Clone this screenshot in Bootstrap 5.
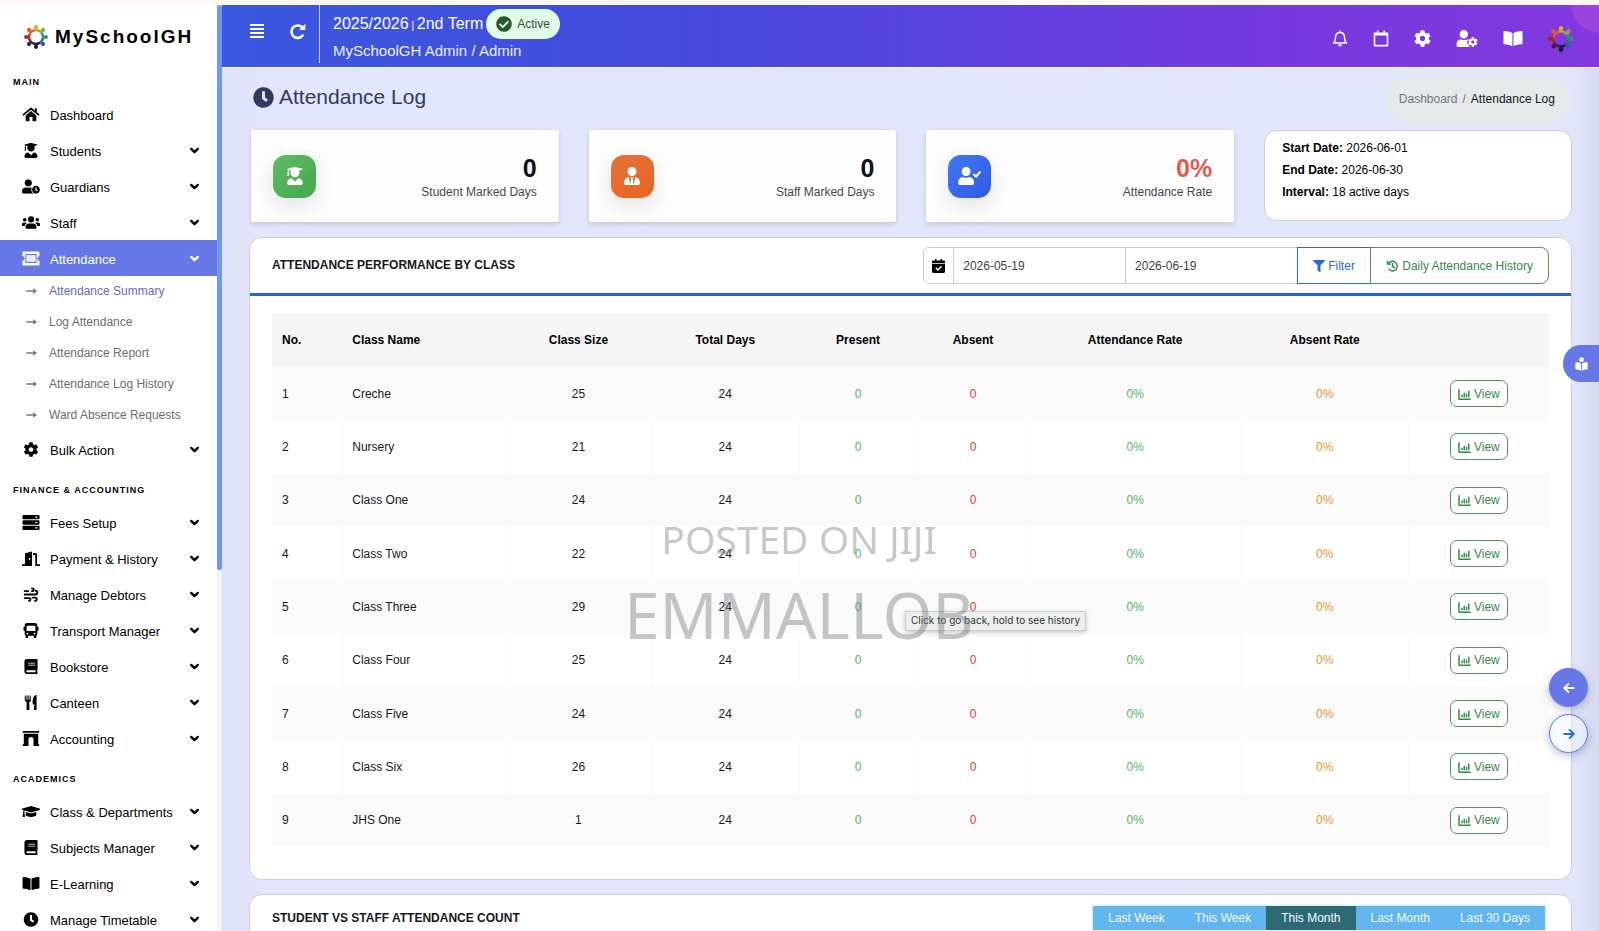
<!DOCTYPE html>
<html lang="en">
<head>
<meta charset="utf-8">
<meta name="viewport" content="width=device-width, initial-scale=1">
<title>Attendance Log</title>
<link href="https://cdn.jsdelivr.net/npm/bootstrap@5.3.0/dist/css/bootstrap.min.css" rel="stylesheet">
<style>
  body { font-family: "Liberation Sans", Arial, sans-serif; font-size: 12px; color: #16181b; background: #fff; border-top: 5px solid #fdf7f6; }
  svg { fill: currentColor; flex: none; }
  a { text-decoration: none; color: inherit; }
  .ln { fill: none; stroke: currentColor; stroke-linecap: round; stroke-linejoin: round; }

  /* sidebar */
  .side { width: 217px; flex: none; overflow: hidden; background: #fff; color: #000; }
  .brandline { height: 54px; padding: 10px 0 0 24px; gap: 7px; font-size: 19px; letter-spacing: 2px; }
  .side h2 { height: 37px; margin: 0; padding: 17px 0 0 13px; font-size: 9px; line-height: 12px; font-weight: 700; letter-spacing: 1px; }
  .side-link { height: 36px; padding: 4px 17px 0 22px; font-size: 13px; gap: 10px; }
  .side-link > svg:first-child { width: 18px; height: 15px; margin-bottom: 4px; }
  .side-link .chev { width: 11px; height: 11px; margin: 0 0 4px auto; }
  .side-link.open { background: #6777e6; color: #fff; }
  .side-sub { height: 31px; padding: 0 0 2px 26px; gap: 12px; font-size: 12px; color: #6a6d70; }
  .side-sub svg { width: 11px; height: 8px; color: #777; }
  .side-sub.now { color: #6468cf; }
  .rail { width: 5px; flex: none; background: #f1f5f5; }
  .rail div { height: 61%; background: #6f9aea; border-radius: 3px; }

  /* top bar */
  .stage { background: linear-gradient(90deg, #dfe2f8, #e2e6fc 3%, #e2e6fb 98%, #d6daf0); overflow: hidden; }
  .topbar { height: 63px; color: #fff; border-bottom: 1px solid #fff;
    background: radial-gradient(circle at 100% 0, #9a44dc 0 27px, transparent 28px), linear-gradient(90deg, #3a58df, #4549dc 35%, #7439df 75%, #8338df); }
  .topbar button { background: none; border: 0; padding: 0; color: #fff; line-height: 0; }
  .tools { height: 58px; padding: 0 13px 6px 28px; gap: 25px; border-right: 1px solid #cfd6fa; }
  .term { padding: 4px 0 0 13px; font-size: 16px; }
  .term small { font-size: 10px; }
  .who { font-size: 15px; line-height: 23px; color: #eef0ff; }
  .live { height: 30px; padding: 0 10px; gap: 5px; margin-left: 3px; border-radius: 15px; background: #e0fbe6; color: #33523b; font-size: 12px; }
  .live svg { color: #22592d; }
  .acts { padding: 5px 25px 0 0; gap: 25px; }

  /* page */
  .inner { padding: 0 27px; }
  .titleline { height: 62px; }
  .titleline h1 { margin: 0; font-size: 21px; color: #34395e; gap: 5px; padding: 0 0 4px 4px; }
  .crumbs { height: 45px; padding: 0 15px 0 12px; margin-right: 2px; border-radius: 23px; background: #e6e9ea; --bs-breadcrumb-item-padding-x: 5px; --bs-breadcrumb-divider-color: #6f757b; box-shadow: 0 0 3px #e6e9ea; }
  .crumbs a { color: #6f757b; }
  .crumbs .active { color: #16181b; }
  .stats { --bs-gutter-x: 30px; padding-left: 2px; margin-bottom: 15px; }
  .stat { height: 92px; padding: 0 22px; background: #fefefe; border-radius: 3px; box-shadow: 0 2px 4px rgba(60, 60, 100, .2); }
  .stat > .text-end { padding-top: 3px; }
  .tile { width: 43px; height: 43px; border-radius: 13px; color: #fff; box-shadow: 0 8px 24px rgba(0, 0, 0, .12); }
  .tile-green { background: linear-gradient(135deg, #5fbb66, #43a84b); }
  .tile-orange { background: linear-gradient(135deg, #e2733a, #ea6420); }
  .tile-blue { background: linear-gradient(135deg, #4179f0, #3158e6); }
  .stat strong { font-size: 25px; line-height: 28px; color: #0d1117; }
  .stat .low { color: #e25a50; }
  .stat span { color: #44484d; line-height: 20px; }
  .panel { background: #fff; border: 1px solid #cbcfe0; border-radius: 13px; }
  .period { height: 91px; padding: 6px 17px; line-height: 22px; color: #000; }
  .panel-head { padding: 0 22px; }
  .panel-head h2 { margin: 0; font-size: 12px; font-weight: 700; }
  .perf { padding-bottom: 32px; margin-bottom: 14px; }
  .perf .panel-head { height: 58px; border-bottom: 3px solid #2468cf; }
  .range { width: 49%; }
  .range .input-group-text { padding: 0 8px; background: #fff; border-color: #c9cccf; color: #000; }
  .range .form-control { height: 37px; padding: 0 9px; font-size: 12px; color: #3b3f44; border-color: #c9cccf; border-radius: 4px; }
  .range .btn { padding: 0 15px; font-size: 12px; border-radius: 8px; }
  .btn-blue { --bs-btn-color: #2b66d9; --bs-btn-border-color: #2b66d9; }
  .btn-green { --bs-btn-color: #37884b; --bs-btn-border-color: #4b9a5d; }
  .sheet { padding: 17px 22px 0; }
  .sheet table { margin: 0; table-layout: fixed; color: #16181b; }
  .sheet th, .sheet td { border: 0; padding: 0 10px; vertical-align: middle; text-align: center; }
  .sheet th { height: 54px; background: #f5f5f5; color: #000; }
  .sheet td { height: 53px; }
  .sheet tr:nth-child(3n) td { height: 54px; }
  .sheet tr > :nth-child(-n+2) { text-align: left; }
  .sheet tbody tr:nth-child(odd) td { background: #fafafa; box-shadow: none; }
  .sheet tbody tr:nth-child(even) td + td { box-shadow: inset 1px 0 #fafafa; }
  .sheet td:nth-child(5), .sheet td:nth-child(7) { color: #55b562; }
  .sheet td:nth-child(6) { color: #d63d42; }
  .sheet td:nth-child(8) { color: #e9962c; }
  .sheet .btn { height: 27px; padding: 0 7px; font-size: 12px; border-radius: 7px; background: #fff; }
  .c1 { width: 5.5%; } .c2 { width: 12.8%; } .c3 { width: 11.4%; } .c4 { width: 11.6%; } .c5 { width: 9.2%; }
  .c6 { width: 8.8%; } .c7 { width: 16.6%; } .c8 { width: 13.1%; } .c9 { width: 11%; }
  .count { height: 160px; }
  .count .panel-head { height: 46px; }
  .spans { margin-right: 4px; box-shadow: 0 0 3px #9fd4f8; }
  .spans .btn { height: 24px; padding: 0 15px; font-size: 12px; border: 0; border-radius: 0; color: #f4fbff; background: #63b5f0; }
  .spans .btn.on { background: #2d6a76; }

  /* layers over the page */
  .mark-over { top: 507px; left: 222px; width: 1154px; pointer-events: none; color: rgba(125, 129, 132, .45); font-family: "Noto Sans", sans-serif; white-space: nowrap; z-index: 5; }
  .mark-over p { margin: 0; font-size: 39px; line-height: 64px; }
  .mark-over p + p { font-size: 64px; line-height: 88px; }
  .hint { top: 611px; left: 905px; height: 20px; padding: 0 5px; z-index: 4; background: #eceeee; border: 1px solid #c9cccc; box-shadow: 0 2px 5px rgba(0, 0, 0, .18); color: #333; font: 10px/17px Inter, sans-serif; }
  .tab-book { right: 0; top: 345px; width: 36px; height: 37px; border: 0; border-radius: 18px 0 0 18px; background: #6777e6; color: #fff; }
  .pager { right: 11px; top: 668px; gap: 7px; }
  .pager button { width: 39px; height: 39px; padding: 0; border-radius: 50%; border: 1px solid #6777e6; background: #6777e6; color: #fff; box-shadow: 0 3px 8px rgba(40, 50, 110, .3); }
  .pager button + button { background: rgba(240, 244, 255, .5); color: #2b66d9; border-color: #4a78dc; }
</style>
</head>
<body class="vh-100 overflow-hidden d-flex">

<svg width="0" height="0" class="position-absolute" aria-hidden="true">
  <defs>
  <symbol id="grad" viewBox="0 0 448 512"><path d="M319.4 320.6L224 416l-95.4-95.4C57.1 323.7 0 382.2 0 454.4v9.6c0 26.5 21.5 48 48 48h352c26.5 0 48-21.5 48-48v-9.6c0-72.2-57.1-130.7-128.6-133.8zM13.6 79.8l6.4 1.5v58.4c-7 4.2-12 11.5-12 20.3 0 8.4 4.6 15.4 11.1 19.7L3.5 242c-1.7 6.9 2.1 14 7.6 14h41.8c5.5 0 9.3-7.1 7.6-14l-15.6-62.3C51.4 175.4 56 168.4 56 160c0-8.8-5-16.1-12-20.3V87.1l66 15.9c-8.6 17.2-14 36.4-14 57 0 70.7 57.3 128 128 128s128-57.3 128-128c0-20.6-5.3-39.8-14-57l96.3-23.2c18.2-4.4 18.2-27.1 0-31.5l-190.4-46c-13-3.1-26.7-3.1-39.7 0L13.6 48.2c-18.1 4.4-18.1 27.2 0 31.6z"/></symbol>
  <symbol id="tie" viewBox="0 0 448 512"><path d="M224 256c70.7 0 128-57.3 128-128S294.7 0 224 0 96 57.3 96 128s57.3 128 128 128zm95.8 32.6L272 480l-32-136 32-56h-96l32 56-32 136-47.8-191.4C56.9 292 0 350.3 0 422.4V464c0 26.5 21.5 48 48 48h352c26.5 0 48-21.5 48-48v-41.6c0-72.1-56.9-130.4-128.2-133.8z"/></symbol>
  <path id="person" d="M224 256c70.7 0 128-57.3 128-128S294.7 0 224 0 96 57.3 96 128s57.3 128 128 128zm89.6 32h-16.7c-22.2 10.2-46.9 16-72.9 16s-50.6-5.8-72.9-16h-16.7C60.2 288 0 348.2 0 422.4V464c0 26.5 21.5 48 48 48h352c26.5 0 48-21.5 48-48v-41.6c0-74.2-60.2-134.4-134.4-134.4z"/>
  <path id="gearp" d="M487.4 315.7l-42.6-24.6c4.3-23.2 4.3-47 0-70.2l42.6-24.6c4.9-2.8 7.1-8.6 5.5-14-11.1-35.6-30-67.8-54.7-94.6-3.8-4.1-10-5.1-14.8-2.3L380.8 110c-17.9-15.4-38.5-27.3-60.8-35.1V25.8c0-5.6-3.9-10.5-9.4-11.7-36.7-8.2-74.3-7.8-109.2 0-5.5 1.2-9.4 6.1-9.4 11.7V75c-22.2 7.9-42.8 19.8-60.8 35.1L88.7 85.5c-4.9-2.8-11-1.9-14.8 2.3-24.7 26.7-43.6 58.9-54.7 94.6-1.7 5.4.6 11.2 5.5 14L67.3 221c-4.3 23.2-4.3 47 0 70.2l-42.6 24.6c-4.9 2.8-7.1 8.6-5.5 14 11.1 35.6 30 67.8 54.7 94.6 3.8 4.1 10 5.1 14.8 2.3l42.6-24.6c17.9 15.4 38.5 27.3 60.8 35.1v49.2c0 5.6 3.9 10.5 9.4 11.7 36.7 8.2 74.3 7.8 109.2 0 5.5-1.2 9.4-6.1 9.4-11.7v-49.2c22.2-7.9 42.8-19.8 60.8-35.1l42.6 24.6c4.9 2.8 11 1.9 14.8-2.3 24.7-26.7 43.6-58.9 54.7-94.6 1.5-5.5-.7-11.3-5.6-14.1zM256 336c-44.1 0-80-35.9-80-80s35.9-80 80-80 80 35.9 80 80-35.9 80-80 80z"/>
  <path id="clockp" d="M256 8C119 8 8 119 8 256s111 248 248 248 248-111 248-248S393 8 256 8zm57.1 350.1L224.9 294c-3.1-2.3-4.9-5.9-4.9-9.7V116c0-6.6 5.4-12 12-12h48c6.6 0 12 5.4 12 12v137.7l63.5 46.2c5.4 3.9 6.5 11.4 2.6 16.8l-28.2 38.8c-3.9 5.3-11.4 6.5-16.8 2.6z"/>
  <symbol id="gear" viewBox="0 0 512 512"><use href="#gearp"/></symbol>
  <symbol id="clock" viewBox="0 0 512 512"><use href="#clockp"/></symbol>
  <mask id="cut"><rect width="640" height="512" fill="#fff"/><circle cx="496" cy="368" r="166" fill="#000"/></mask>
  <symbol id="userclock" viewBox="0 0 640 512"><g mask="url(#cut)"><use href="#person"/></g><use href="#clockp" transform="translate(352 224) scale(.5625)"/></symbol>
  <symbol id="usergear" viewBox="0 0 640 512"><g mask="url(#cut)"><use href="#person"/></g><use href="#gearp" transform="translate(344 210) scale(.59)"/></symbol>
  <symbol id="usercheck" viewBox="0 0 640 512"><use href="#person"/><path class="ln" stroke-width="60" d="M450 220l55 55 108-125"/></symbol>
  <symbol id="users" viewBox="0 0 640 512"><circle cx="96" cy="160" r="64"/><circle cx="544" cy="160" r="64"/><circle cx="320" cy="144" r="112"/><path d="M64 256h64c18 0 34 7 45 19-40 22-69 62-75 109H32c-18 0-32-14-32-32v-32c0-35 29-64 64-64zM576 256h-64c-18 0-34 7-45 19 40 22 69 62 75 109h66c18 0 32-14 32-32v-32c0-35-29-64-64-64zM243 288h154c64 0 115 52 115 115v29c0 27-21 48-48 48H176c-27 0-48-21-48-48v-29c0-63 51-115 115-115z"/></symbol>
  <symbol id="home" viewBox="0 0 18 16"><path class="ln" stroke-width="1.900" d="M1 8.2L9 1.6l8 6.6M14.2 2v3"/><path d="M3.3 9L9 4.3 14.700 9v5.500a.6.6 0 0 1-.6.6h-3.500v-4.400H7.400v4.400H3.900a.6.6 0 0 1-.6-.6z"/></symbol>
  <symbol id="ticket" viewBox="0 0 18 14"><path fill-rule="evenodd" d="M1.500 0h15c.6 0 1 .4 1 1v3.800a2.200 2.200 0 0 0 0 4.400V13c0 .6-.4 1-1 1h-15c-.6 0-1-.4-1-1V9.200a2.200 2.200 0 0 0 0-4.400V1c0-.6.4-1 1-1zm1.800 2.600v8.800h11.400V2.600z"/><path d="M4.300 3.600h9.400v6.800H4.300z" opacity=".85"/></symbol>
  <symbol id="server" viewBox="0 0 16 14"><path fill-rule="evenodd" d="M1 0h14a1 1 0 0 1 1 1v2a1 1 0 0 1-1 1H1a1 1 0 0 1-1-1V1a1 1 0 0 1 1-1zm11 1.500v1h2v-1zM1 5h14a1 1 0 0 1 1 1v2a1 1 0 0 1-1 1H1a1 1 0 0 1-1-1V6a1 1 0 0 1 1-1zm11 1.500v1h2v-1zM1 10h14a1 1 0 0 1 1 1v2a1 1 0 0 1-1 1H1a1 1 0 0 1-1-1v-2a1 1 0 0 1 1-1zm11 1.500v1h2v-1z"/></symbol>
  <symbol id="door" viewBox="0 0 18 15"><path fill-rule="evenodd" d="M3 2.200L10 .4V15H0v-1.800h3zM7.600 7a.8 1 0 1 0 .01 0z"/><path d="M11 2.200h4v11h3V15h-4.700V4H11z"/></symbol>
  <symbol id="wind" viewBox="0 0 16 16"><path class="ln" stroke-width="1.900" d="M1.200 4.300h4M9 1.500c2.600 0 2.600 3 0 3M1.200 8h11.400c2.800 0 2.800-4 .4-4M1.200 11.800h4.600c2.200 0 2.200 3 0 3M9.500 11.400h2.700c2.600 0 2.600 3.400 0 3.400"/></symbol>
  <symbol id="bus" viewBox="0 0 16 16"><path fill-rule="evenodd" d="M4 0h8c1.800 0 2.700.8 2.700 2.200V4h.5c.5 0 .8.300.8.800v3c0 .5-.3.800-.8.800h-.5V12c0 .7-.4 1-.9 1v2.200c0 .5-.3.800-.8.800h-1.200c-.5 0-.8-.3-.8-.8V13.500H5v1.700c0 .5-.3.800-.8.800H3c-.5 0-.8-.3-.8-.8V13c-.5 0-.9-.3-.9-1V8.600H.8C.3 8.600 0 8.300 0 7.800v-3C0 4.300.3 4 .8 4h.5V2.200C1.300.8 2.200 0 4 0zM3.300 3v5.500h9.400V3zm.9 7.300a.9.900 0 1 0 .01 0zm7.600 0a.9.900 0 1 0 .01 0z"/></symbol>
  <symbol id="book" viewBox="0 0 14 16"><path fill-rule="evenodd" d="M3 0h10.200c.5 0 .8.300.8.800v10.500c0 .3-.1.500-.3.600-.1.500-.1 1.600 0 2.100.2.100.3.300.3.500v.7c0 .5-.3.800-.8.800H3a3 3 0 0 1-3-3V3a3 3 0 0 1 3-3zM4 4v.9h7.200V4zm0 2v.9h7.200V6zM3 12a1 1 0 0 0 0 2h8.900v-2z"/></symbol>
  <symbol id="fork" viewBox="0 0 14 16"><path d="M.5.500h.9V5h.8V.500h1.100V5h.8V.500H5.200V5h.8V.500h.6c.5 3 .5 4.900 0 6-.3.600-.8 1-1.500 1.200l.3 7.600c0 .5-.3.700-.8.700H2.900c-.5 0-.8-.3-.8-.7l.3-7.600C1.700 7.500 1.200 7.100.8 6.500.2 5.400.1 3.500.5.500zM13 .8v14.500c0 .4-.3.700-.7.700h-1.500c-.5 0-.8-.3-.7-.8l.5-5.200H9C8.200 5.500 9 1.300 12.300.1c.4-.1.700.2.700.7z"/></symbol>
  <symbol id="arch" viewBox="0 0 18 15"><path d="M.8 0h16.400v1.800H.8zM1.800 2.800h14.400v10.400h1V15h-5.700V8.600a2.500 2.500 0 0 0-5 0V15H.8v-1.800h1z"/></symbol>
  <symbol id="cap" viewBox="0 0 640 512"><path d="M622.34 153.2L343.4 67.5c-15.2-4.67-31.6-4.67-46.79 0L17.66 153.2c-23.54 7.23-23.54 38.36 0 45.59l48.63 14.94c-10.67 13.19-17.23 29.28-17.88 46.9C38.78 266.15 32 276.11 32 288c0 10.78 5.68 19.85 13.86 25.65L20.33 428.53C18.11 438.52 25.71 448 35.94 448h56.11c10.24 0 17.84-9.48 15.62-19.47L82.14 313.65C90.32 307.85 96 298.78 96 288c0-11.57-6.47-21.25-15.66-26.87.76-15.02 8.44-28.3 20.69-36.72L296.6 284.5c9.06 2.78 26.44 6.25 46.79 0l278.95-85.7c23.55-7.24 23.55-38.36 0-45.6zM352.79 315.09c-28.53 8.76-52.84 3.92-65.59 0l-145.02-44.55L128 384c0 35.35 85.96 64 192 64s192-28.65 192-64l-14.18-113.47-145.03 44.56z"/></symbol>
  <symbol id="open" viewBox="0 0 576 512"><path d="M542.22 32.05c-54.8 3.11-163.72 14.43-230.96 55.59-4.64 2.84-7.27 7.89-7.27 13.17v363.87c0 11.55 12.63 18.85 23.28 13.49 69.18-34.82 169.23-44.32 218.7-46.92 16.89-.89 30.02-14.43 30.02-30.66V62.75c.01-17.71-15.35-31.74-33.77-30.7zM264.73 87.64C197.5 46.48 88.58 35.17 33.78 32.05 15.36 31.01 0 45.04 0 62.75V400.6c0 16.24 13.13 29.78 30.02 30.66 49.49 2.6 149.59 12.11 218.77 46.95 10.62 5.35 23.21-1.94 23.21-13.46V100.63c0-5.29-2.62-10.14-7.27-12.99z"/></symbol>
  <symbol id="reader" viewBox="0 0 14 16"><circle cx="7" cy="3" r="2.700"/><path d="M6.500 7.600C5 6.400 2.700 6 .8 6c-.5 0-.8.300-.8.700v7c0 .4.300.7.700.7 1.900.1 4.100.5 5.800 1.500zM7.500 7.600C9 6.400 11.300 6 13.200 6c.5 0 .8.300.8.700v7c0 .4-.3.700-.7.700-1.900.1-4.100.5-5.800 1.500z"/></symbol>
  <symbol id="funnel" viewBox="0 0 512 512"><path d="M487.976 0H24.028C2.71 0-8.047 25.866 7.058 40.971L192 225.941V432c0 7.831 3.821 15.17 10.237 19.662l80 55.98C298.02 518.69 320 507.493 320 487.98V225.941l184.947-184.97C520.021 25.896 509.338 0 487.976 0z"/></symbol>
  <symbol id="tick" viewBox="0 0 512 512"><path d="M504 256c0 136.967-111.033 248-248 248S8 392.967 8 256 119.033 8 256 8s248 111.033 248 248zM227.314 387.314l184-184c6.248-6.248 6.248-16.379 0-22.627l-22.627-22.627c-6.248-6.249-16.379-6.249-22.628 0L216 308.118l-70.059-70.059c-6.248-6.248-16.379-6.248-22.628 0l-22.627 22.627c-6.248 6.248-6.248 16.379 0 22.627l104 104c6.249 6.249 16.379 6.249 22.628.001z"/></symbol>
  <symbol id="hist" viewBox="0 0 16 16"><path class="ln" stroke-width="1.900" d="M2.300 5.200A6.400 6.400 0 1 1 3 12.200M1.300 1.600v3.900h3.900M8 4.600v3.800l2.500 1.800"/></symbol>
  <symbol id="bars" viewBox="0 0 16 14"><path class="ln" stroke-width="1.900" d="M1 1v12h14.300M4.800 8v2M7.700 5.400V10M10.600 6.800V10M13.500 3v7"/></symbol>
  <symbol id="chev" viewBox="0 0 12 12"><path class="ln" stroke-width="2.600" d="M2.400 4.300L6 7.700l3.600-3.400"/></symbol>
  <symbol id="go" viewBox="0 0 11 8"><path class="ln" stroke-width="1.500" d="M.8 4h8.500"/><path d="M7.200 1.200L11 4 7.200 6.800z"/></symbol>
  <symbol id="arrow" viewBox="0 0 14 14"><path class="ln" stroke-width="2.200" d="M1.500 7h11M7.700 2.200L12.500 7l-4.800 4.800"/></symbol>
  <g id="fig"><circle cy="-9.800" r="2.100"/><path d="M-4-4.600C-4.200-7.600-2.200-8.500 0-7.800 2.200-8.500 4.200-7.600 4-4.600 1.800-6.200-1.800-6.200-4-4.600z"/></g>
  <symbol id="ring" viewBox="-12 -12 24 24"><use href="#fig" fill="#e2a33a"/><use href="#fig" fill="#7fae3f" transform="rotate(45)"/><use href="#fig" fill="#2f9070" transform="rotate(90)"/><use href="#fig" fill="#2a5fa8" transform="rotate(135)"/><use href="#fig" fill="#15163f" transform="rotate(180)"/><use href="#fig" fill="#42204f" transform="rotate(225)"/><use href="#fig" fill="#a3272f" transform="rotate(270)"/><use href="#fig" fill="#dd5b2c" transform="rotate(315)"/></symbol>
  </defs>
</svg>

<nav class="side" aria-label="Main menu">
  <a href="#" class="brandline d-flex align-items-center fw-bold"><svg width="24" height="24"><use href="#ring"/></svg>MySchoolGH</a>
  <h2>MAIN</h2>
  <a href="#" class="side-link d-flex align-items-center"><svg><use href="#home"/></svg>Dashboard</a>
  <a href="#" class="side-link d-flex align-items-center"><svg><use href="#grad"/></svg>Students<svg class="chev"><use href="#chev"/></svg></a>
  <a href="#" class="side-link d-flex align-items-center"><svg><use href="#userclock"/></svg>Guardians<svg class="chev"><use href="#chev"/></svg></a>
  <a href="#" class="side-link d-flex align-items-center"><svg><use href="#users"/></svg>Staff<svg class="chev"><use href="#chev"/></svg></a>
  <a href="#" class="side-link open d-flex align-items-center"><svg><use href="#ticket"/></svg>Attendance<svg class="chev"><use href="#chev"/></svg></a>
  <a href="#" class="side-sub now d-flex align-items-center"><svg><use href="#go"/></svg>Attendance Summary</a>
  <a href="#" class="side-sub d-flex align-items-center"><svg><use href="#go"/></svg>Log Attendance</a>
  <a href="#" class="side-sub d-flex align-items-center"><svg><use href="#go"/></svg>Attendance Report</a>
  <a href="#" class="side-sub d-flex align-items-center"><svg><use href="#go"/></svg>Attendance Log History</a>
  <a href="#" class="side-sub d-flex align-items-center"><svg><use href="#go"/></svg>Ward Absence Requests</a>
  <a href="#" class="side-link d-flex align-items-center"><svg><use href="#gear"/></svg>Bulk Action<svg class="chev"><use href="#chev"/></svg></a>
  <h2>FINANCE &amp; ACCOUNTING</h2>
  <a href="#" class="side-link d-flex align-items-center"><svg><use href="#server"/></svg>Fees Setup<svg class="chev"><use href="#chev"/></svg></a>
  <a href="#" class="side-link d-flex align-items-center"><svg><use href="#door"/></svg>Payment &amp; History<svg class="chev"><use href="#chev"/></svg></a>
  <a href="#" class="side-link d-flex align-items-center"><svg><use href="#wind"/></svg>Manage Debtors<svg class="chev"><use href="#chev"/></svg></a>
  <a href="#" class="side-link d-flex align-items-center"><svg><use href="#bus"/></svg>Transport Manager<svg class="chev"><use href="#chev"/></svg></a>
  <a href="#" class="side-link d-flex align-items-center"><svg><use href="#book"/></svg>Bookstore<svg class="chev"><use href="#chev"/></svg></a>
  <a href="#" class="side-link d-flex align-items-center"><svg><use href="#fork"/></svg>Canteen<svg class="chev"><use href="#chev"/></svg></a>
  <a href="#" class="side-link d-flex align-items-center"><svg><use href="#arch"/></svg>Accounting<svg class="chev"><use href="#chev"/></svg></a>
  <h2>ACADEMICS</h2>
  <a href="#" class="side-link d-flex align-items-center"><svg><use href="#cap"/></svg>Class &amp; Departments<svg class="chev"><use href="#chev"/></svg></a>
  <a href="#" class="side-link d-flex align-items-center"><svg><use href="#book"/></svg>Subjects Manager<svg class="chev"><use href="#chev"/></svg></a>
  <a href="#" class="side-link d-flex align-items-center"><svg><use href="#open"/></svg>E-Learning<svg class="chev"><use href="#chev"/></svg></a>
  <a href="#" class="side-link d-flex align-items-center"><svg><use href="#clock"/></svg>Manage Timetable<svg class="chev"><use href="#chev"/></svg></a>
</nav>
<div class="rail"><div></div></div>

<div class="stage flex-grow-1">
  <header class="topbar d-flex">
    <div class="tools d-flex align-items-center">
      <button type="button" aria-label="Toggle menu"><svg width="14" height="14" viewBox="0 0 14 14"><path d="M0 0h14v2H0zM0 4h14v2H0zM0 8h14v2H0zM0 12h14v2H0z"/></svg></button>
      <button type="button" aria-label="Reload"><svg width="17" height="17" viewBox="0 0 17 17"><path class="ln" stroke-width="2.600" d="M13.900 5.300A6.200 6.200 0 1 0 13.500 12.600"/><path d="M16.300.8v5.600a.6.6 0 0 1-.6.6H10z"/></svg></button>
    </div>
    <div class="term">
      <div class="d-flex align-items-center"><span>2025/2026<small> | </small>2nd Term</span>
        <span class="live d-inline-flex align-items-center"><svg width="16" height="16"><use href="#tick"/></svg>Active</span></div>
      <div class="who">MySchoolGH Admin / Admin</div>
    </div>
    <div class="acts d-flex align-items-center ms-auto">
      <button type="button" aria-label="Notifications"><svg width="16" height="17" viewBox="0 0 16 17"><path class="ln" stroke-width="1.500" d="M8 1v1.200M1.500 13c1.700-1.500 2-3 2-5.300C3.500 4.500 5.300 2.500 8 2.500s4.500 2 4.500 5.200c0 2.300.3 3.800 2 5.300z"/><path d="M6 14.500h4a2 2 0 0 1-4 0z"/></svg></button>
      <button type="button" aria-label="Calendar"><svg width="16" height="17" viewBox="0 0 16 17"><path class="ln" stroke-width="1.600" d="M1.500 3.400h13v12.200h-13zM4.800 1v2M11.200 1v2"/><path d="M1 3h14v2.500H1z"/></svg></button>
      <button type="button" aria-label="Settings"><svg width="17" height="17"><use href="#gear"/></svg></button>
      <button type="button" aria-label="User settings"><svg width="22" height="17"><use href="#usergear"/></svg></button>
      <button type="button" aria-label="Library"><svg width="20" height="17"><use href="#open"/></svg></button>
      <button type="button" aria-label="Profile"><svg width="26" height="26"><use href="#ring"/></svg></button>
    </div>
  </header>

  <main class="inner">
    <div class="titleline d-flex justify-content-between align-items-center">
      <h1 class="d-flex align-items-center"><svg width="21" height="21"><use href="#clock"/></svg>Attendance Log</h1>
      <ol class="breadcrumb crumbs align-items-center mb-0">
        <li class="breadcrumb-item"><a href="#">Dashboard</a></li>
        <li class="breadcrumb-item active">Attendance Log</li>
      </ol>
    </div>

    <div class="row stats">
      <div class="col-3"><div class="stat d-flex align-items-center justify-content-between">
        <div class="tile tile-green d-flex align-items-center justify-content-center"><svg width="16" height="18"><use href="#grad"/></svg></div>
        <div class="text-end d-flex flex-column"><strong>0</strong><span>Student Marked Days</span></div></div></div>
      <div class="col-3"><div class="stat d-flex align-items-center justify-content-between">
        <div class="tile tile-orange d-flex align-items-center justify-content-center"><svg width="16" height="18"><use href="#tie"/></svg></div>
        <div class="text-end d-flex flex-column"><strong>0</strong><span>Staff Marked Days</span></div></div></div>
      <div class="col-3"><div class="stat d-flex align-items-center justify-content-between">
        <div class="tile tile-blue d-flex align-items-center justify-content-center"><svg width="23" height="18"><use href="#usercheck"/></svg></div>
        <div class="text-end d-flex flex-column"><strong class="low">0%</strong><span>Attendance Rate</span></div></div></div>
      <div class="col-3"><div class="panel period">
        <div><b>Start Date:</b> 2026-06-01</div><div><b>End Date:</b> 2026-06-30</div><div><b>Interval:</b> 18 active days</div></div></div>
    </div>

    <section class="panel perf">
      <div class="panel-head d-flex align-items-center justify-content-between">
        <h2>ATTENDANCE PERFORMANCE BY CLASS</h2>
        <form class="input-group range">
          <label class="input-group-text" for="from"><svg width="13" height="14" viewBox="0 0 13 14"><path fill-rule="evenodd" d="M3 0h1.500v1.600h4V0H10v1.600h1.800c.7 0 1.200.5 1.200 1.200V4H0V2.800c0-.7.5-1.200 1.200-1.200H3zM0 4.800h13v8c0 .7-.5 1.200-1.200 1.200H1.200C.5 14 0 13.500 0 12.800zm3.300 4.500l2.500 2.600 4.200-4.200-1-1-3.200 3.200-1.500-1.600z"/></svg></label>
          <input id="from" class="form-control" type="text" value="2026-05-19" aria-label="From">
          <input class="form-control" type="text" value="2026-06-19" aria-label="To">
          <button type="button" class="btn btn-outline-primary btn-blue"><svg width="12" height="12"><use href="#funnel"/></svg> Filter</button>
          <button type="button" class="btn btn-outline-success btn-green"><svg width="13" height="12"><use href="#hist"/></svg> Daily Attendance History</button>
        </form>
      </div>
      <div class="sheet">
        <table class="table">
          <thead><tr><th class="c1">No.</th><th class="c2">Class Name</th><th class="c3">Class Size</th><th class="c4">Total Days</th><th class="c5">Present</th><th class="c6">Absent</th><th class="c7">Attendance Rate</th><th class="c8">Absent Rate</th><th class="c9"></th></tr></thead>
          <tbody>
            <tr><td>1</td><td>Creche</td><td>25</td><td>24</td><td>0</td><td>0</td><td>0%</td><td>0%</td><td><button type="button" class="btn btn-outline-success btn-green"><svg width="13" height="11"><use href="#bars"/></svg> View</button></td></tr>
            <tr><td>2</td><td>Nursery</td><td>21</td><td>24</td><td>0</td><td>0</td><td>0%</td><td>0%</td><td><button type="button" class="btn btn-outline-success btn-green"><svg width="13" height="11"><use href="#bars"/></svg> View</button></td></tr>
            <tr><td>3</td><td>Class One</td><td>24</td><td>24</td><td>0</td><td>0</td><td>0%</td><td>0%</td><td><button type="button" class="btn btn-outline-success btn-green"><svg width="13" height="11"><use href="#bars"/></svg> View</button></td></tr>
            <tr><td>4</td><td>Class Two</td><td>22</td><td>24</td><td>0</td><td>0</td><td>0%</td><td>0%</td><td><button type="button" class="btn btn-outline-success btn-green"><svg width="13" height="11"><use href="#bars"/></svg> View</button></td></tr>
            <tr><td>5</td><td>Class Three</td><td>29</td><td>24</td><td>0</td><td>0</td><td>0%</td><td>0%</td><td><button type="button" class="btn btn-outline-success btn-green"><svg width="13" height="11"><use href="#bars"/></svg> View</button></td></tr>
            <tr><td>6</td><td>Class Four</td><td>25</td><td>24</td><td>0</td><td>0</td><td>0%</td><td>0%</td><td><button type="button" class="btn btn-outline-success btn-green"><svg width="13" height="11"><use href="#bars"/></svg> View</button></td></tr>
            <tr><td>7</td><td>Class Five</td><td>24</td><td>24</td><td>0</td><td>0</td><td>0%</td><td>0%</td><td><button type="button" class="btn btn-outline-success btn-green"><svg width="13" height="11"><use href="#bars"/></svg> View</button></td></tr>
            <tr><td>8</td><td>Class Six</td><td>26</td><td>24</td><td>0</td><td>0</td><td>0%</td><td>0%</td><td><button type="button" class="btn btn-outline-success btn-green"><svg width="13" height="11"><use href="#bars"/></svg> View</button></td></tr>
            <tr><td>9</td><td>JHS One</td><td>1</td><td>24</td><td>0</td><td>0</td><td>0%</td><td>0%</td><td><button type="button" class="btn btn-outline-success btn-green"><svg width="13" height="11"><use href="#bars"/></svg> View</button></td></tr>
          </tbody>
        </table>
      </div>
    </section>

    <section class="panel count">
      <div class="panel-head d-flex align-items-center justify-content-between">
        <h2>STUDENT VS STAFF ATTENDANCE COUNT</h2>
        <div class="spans d-flex">
          <button type="button" class="btn">Last Week</button><button type="button" class="btn">This Week</button><button type="button" class="btn on">This Month</button><button type="button" class="btn">Last Month</button><button type="button" class="btn">Last 30 Days</button>
        </div>
      </div>
    </section>
  </main>
</div>

<div class="mark-over position-absolute text-center"><p>POSTED ON JIJI</p><p>EMMALLOB</p></div>
<div class="hint position-absolute">Click to go back, hold to see history</div>
<button type="button" class="tab-book position-absolute" aria-label="Reading list"><svg width="13" height="14"><use href="#reader"/></svg></button>
<div class="pager position-absolute d-flex flex-column">
  <button type="button" aria-label="Back"><svg width="12" height="12" viewBox="0 0 14 14"><path class="ln" stroke-width="2.200" d="M12.500 7h-11M6.300 2.200L1.500 7l4.800 4.800"/></svg></button>
  <button type="button" aria-label="Forward"><svg width="12" height="12"><use href="#arrow"/></svg></button>
</div>

<script src="https://cdn.jsdelivr.net/npm/bootstrap@5.3.0/dist/js/bootstrap.bundle.min.js"></script>
</body>
</html>
